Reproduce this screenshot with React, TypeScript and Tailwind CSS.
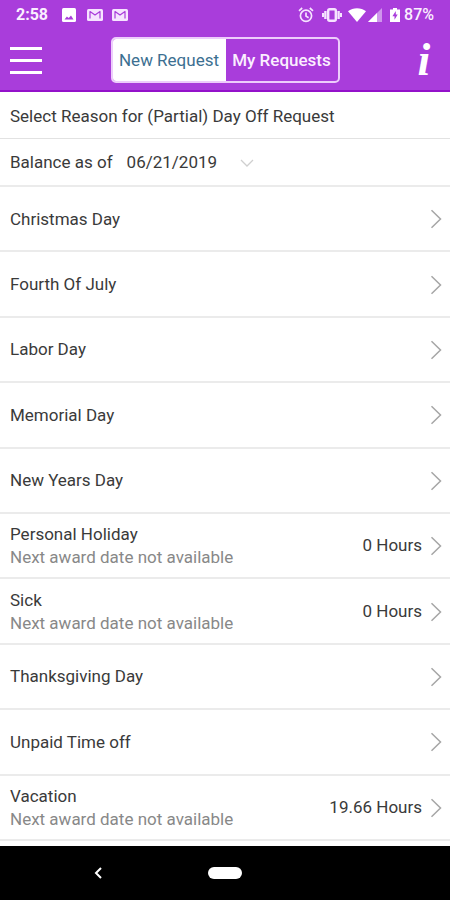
import React, { useState } from "react";

type Reason = {
  name: string;
  note?: string;
  hours?: string;
};

const reasons: Reason[] = [
  { name: "Christmas Day" },
  { name: "Fourth Of July" },
  { name: "Labor Day" },
  { name: "Memorial Day" },
  { name: "New Years Day" },
  {
    name: "Personal Holiday",
    note: "Next award date not available",
    hours: "0 Hours",
  },
  { name: "Sick", note: "Next award date not available", hours: "0 Hours" },
  { name: "Thanksgiving Day" },
  { name: "Unpaid Time off" },
  {
    name: "Vacation",
    note: "Next award date not available",
    hours: "19.66 Hours",
  },
];

const MailIcon = () => (
  <svg className="h-3 w-4" viewBox="0 0 16 12" fill="none">
    <rect width="16" height="12" rx="1.5" fill="#f6e4ff" />
    <path
      d="M3 9.5V2.5L8 6l5-3.5v7"
      stroke="#a93ddb"
      strokeWidth="1.2"
      strokeLinejoin="round"
    />
  </svg>
);

const StatusBar: React.FC = () => (
  <div className="flex h-[30px] items-center justify-between px-4 text-base font-medium text-[#fbefff]">
    <div className="flex items-center">
      <span className="mr-[14px] font-bold">2:58</span>
      <svg className="mr-[11px] size-[14px]" viewBox="0 0 14 14">
        <rect width="14" height="14" rx="1.5" fill="#fff" />
        <path d="M2.5 11.5l2.4-3 1.8 1.6L9 7.6l2.5 3.9z" fill="#a93ddb" />
      </svg>
      <div className="flex gap-[9px]">
        <MailIcon />
        <MailIcon />
      </div>
    </div>
    <div className="flex items-center">
      <svg
        className="mr-2 size-4"
        viewBox="0 0 16 16"
        fill="none"
        stroke="#f6e4ff"
        strokeWidth="1.7"
      >
        <circle cx="8" cy="8.8" r="5.6" />
        <path d="M8 5.5v3.6l2.6 1.6M1 3.8L4.2 1M15 3.8L11.8 1" />
      </svg>
      <svg
        className="mr-[6px] h-4 w-5"
        viewBox="0 0 20 16"
        fill="none"
        stroke="#f6e4ff"
        strokeWidth="2.4"
      >
        <rect x="6.2" y="2.2" width="7.6" height="11.6" rx="1.5" />
        <path d="M3.4 4v8M16.6 4v8" />
        <path d="M1 6v4M19 6v4" strokeWidth="2" />
      </svg>
      <svg className="mr-[2px] h-[14px] w-[18px]" viewBox="0 0 18 14">
        <path d="M0 3.2C5-.8 13-.8 18 3.2L9 14z" fill="#fff" />
      </svg>
      <svg className="mr-2 size-[14px]" viewBox="0 0 14 14">
        <path d="M14 0v14H0z" fill="#cf95ec" />
        <path d="M9 5v9H0z" fill="#fff" />
      </svg>
      <svg className="mr-1 h-[14px] w-[10px]" viewBox="0 0 10 14">
        <path d="M3 0h4v1.5h3V14H0V1.5h3z" fill="#fff" />
        <path d="M5.8 3L2.4 8.3h2.1v3.5l3.2-5.2H5.8z" fill="#a93ddb" />
      </svg>
      <span>87%</span>
    </div>
  </div>
);

const Header: React.FC = () => {
  const [tab, setTab] = useState("new");
  const active = "bg-white text-[#3c6f91]";
  const inactive = "bg-transparent font-medium text-[#fbefff]";
  return (
    <header className="border-b-2 border-[#9311ca] bg-[#a93ddb]">
      <StatusBar />
      <div className="flex h-[60px] items-center justify-between px-2">
        <button
          type="button"
          aria-label="Menu"
          className="flex w-9 flex-col items-center gap-[9px]"
        >
          <span className="h-[3px] w-8 bg-white" />
          <span className="h-[3px] w-8 bg-white" />
          <span className="h-[3px] w-8 bg-white" />
        </button>
        <div className="flex h-[46px] overflow-hidden rounded-[5px] border-2 border-[#edcdfb] text-[17px]">
          <button
            type="button"
            onClick={() => setTab("new")}
            className={`w-[113px] pt-[2px] whitespace-nowrap ${tab === "new" ? active : inactive}`}
          >
            New Request
          </button>
          <button
            type="button"
            onClick={() => setTab("mine")}
            className={`w-[112px] pt-[2px] whitespace-nowrap ${tab === "mine" ? active : inactive}`}
          >
            My Requests
          </button>
        </div>
        <button
          type="button"
          aria-label="Information"
          className="w-9 font-['Liberation_Serif',serif] text-[46px] leading-[46px] font-bold text-white italic"
        >
          i
        </button>
      </div>
    </header>
  );
};

const ReasonRow: React.FC<{ reason: Reason }> = ({ reason }) => (
  <li className="flex border-b-2 border-[#ebebeb]">
    <button
      type="button"
      className="flex flex-1 items-center justify-between pt-px pr-2 pl-[10px] text-left"
    >
      <span className="leading-[23px]">
        <span className="block">{reason.name}</span>
        {reason.note && (
          <span className="block text-[#888888]">{reason.note}</span>
        )}
      </span>
      <span className="flex items-center gap-2">
        {reason.hours}
        <svg
          className="h-5 w-3"
          viewBox="0 0 12 20"
          fill="none"
          stroke="#a6a6a6"
          strokeWidth="1.5"
        >
          <path d="M1.5 1.2l9 8.8-9 8.8" />
        </svg>
      </span>
    </button>
  </li>
);

const App: React.FC = () => {
  return (
    <div className="flex min-h-screen flex-col bg-white font-['Roboto',sans-serif] text-[17px] text-[#3a3a3a]">
      <Header />
      <main className="flex flex-1 flex-col pb-[5px]">
        <h1 className="flex h-[47px] items-center border-b border-[#e2e2e2] pt-[3px] pl-[10px]">
          Select Reason for (Partial) Day Off Request
        </h1>
        <div className="flex h-12 items-center border-b-2 border-[#ebebeb] pt-[2px] pl-[10px]">
          <label htmlFor="balance-date">Balance as of</label>
          <div className="ml-[14px] flex items-center">
            <select
              id="balance-date"
              className="w-[113px] appearance-none bg-transparent"
            >
              <option>06/21/2019</option>
            </select>
            <svg
              className="h-2 w-[14px]"
              viewBox="0 0 14 8"
              fill="none"
              stroke="#cfcfcf"
              strokeWidth="1.3"
            >
              <path d="M1 1l6 6 6-6" />
            </svg>
          </div>
        </div>
        <ul className="grid flex-1 auto-rows-fr">
          {reasons.map((reason) => (
            <ReasonRow key={reason.name} reason={reason} />
          ))}
        </ul>
      </main>
      <nav className="grid h-[54px] grid-cols-[1fr_34px_1fr] items-center bg-black">
        <button
          type="button"
          aria-label="Back"
          className="flex h-full items-center justify-center pr-3"
        >
          <svg
            className="h-3 w-2"
            viewBox="0 0 8 12"
            fill="none"
            stroke="#fff"
            strokeWidth="2"
          >
            <path d="M7 1L2 6l5 5" />
          </svg>
        </button>
        <button
          type="button"
          aria-label="Home"
          className="h-3 rounded-full bg-white"
        />
      </nav>
    </div>
  );
};

export default App;
